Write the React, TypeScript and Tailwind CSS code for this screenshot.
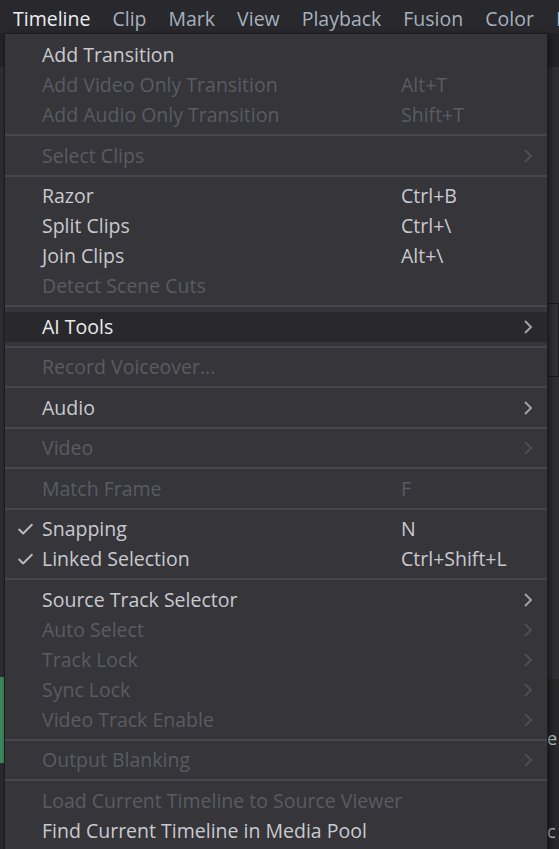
import { Check } from 'lucide-react';

type Item = {
  label: string;
  shortcut?: string;
  disabled?: boolean;
  checked?: boolean;
  submenu?: boolean;
  active?: boolean;
};

// null marks a separator
const items: (Item | null)[] = [
  { label: 'Add Transition' },
  { label: 'Add Video Only Transition', shortcut: 'Alt+T', disabled: true },
  { label: 'Add Audio Only Transition', shortcut: 'Shift+T', disabled: true },
  null,
  { label: 'Select Clips', disabled: true, submenu: true },
  null,
  { label: 'Razor', shortcut: 'Ctrl+B' },
  { label: 'Split Clips', shortcut: 'Ctrl+\\' },
  { label: 'Join Clips', shortcut: 'Alt+\\' },
  { label: 'Detect Scene Cuts', disabled: true },
  null,
  { label: 'AI Tools', submenu: true, active: true },
  null,
  { label: 'Record Voiceover...', disabled: true },
  null,
  { label: 'Audio', submenu: true },
  null,
  { label: 'Video', disabled: true, submenu: true },
  null,
  { label: 'Match Frame', shortcut: 'F', disabled: true },
  null,
  { label: 'Snapping', shortcut: 'N', checked: true },
  { label: 'Linked Selection', shortcut: 'Ctrl+Shift+L', checked: true },
  null,
  { label: 'Source Track Selector', submenu: true },
  { label: 'Auto Select', disabled: true, submenu: true },
  { label: 'Track Lock', disabled: true, submenu: true },
  { label: 'Sync Lock', disabled: true, submenu: true },
  { label: 'Video Track Enable', disabled: true, submenu: true },
  null,
  { label: 'Output Blanking', disabled: true, submenu: true },
  null,
  { label: 'Load Current Timeline to Source Viewer', disabled: true },
  { label: 'Find Current Timeline in Media Pool' },
];

const menus = ['Timeline', 'Clip', 'Mark', 'View', 'Playback', 'Fusion', 'Color', 'Fairlight'];

function Arrow({ dim }: { dim?: boolean }) {
  return (
    <svg width="10" height="14" viewBox="0 0 10 14" className={dim ? 'text-[#4e4f55]' : 'text-[#a2a3a7]'}>
      <polyline points="2,1 8,7 2,13" fill="none" stroke="currentColor" strokeWidth="2" />
    </svg>
  );
}

function MenuRow({ item }: { item: Item }) {
  const text = item.active
    ? 'text-[#ececee]'
    : item.disabled
      ? 'text-[#5b5c61]'
      : 'text-[#c9cacf]';
  return (
    <div
      className={`flex h-[30px] items-center text-[19.5px] ${text} ${
        item.active ? 'bg-[#29292b]' : ''
      }`}
    >
      <div className="flex w-[37px] shrink-0 items-center justify-end pr-[7px]">
        {item.checked && <Check className="h-[19px] w-[19px] text-[#b9babd]" strokeWidth={2.5} />}
      </div>
      <span className="w-[359px] shrink-0 whitespace-nowrap">{item.label}</span>
      <span className="flex-1 whitespace-nowrap">{item.shortcut}</span>
      <div className="flex w-[24px] shrink-0 items-center">
        {item.submenu && <Arrow dim={item.disabled} />}
      </div>
    </div>
  );
}

export default function App() {
  return (
    <div
      className="relative h-[849px] w-[559px] overflow-hidden bg-[#2e2e33]"
      style={{ fontFamily: '"Open Sans", "Noto Sans", sans-serif' }}
    >
      {/* top menu bar */}
      <div className="flex h-[33px] items-center gap-[22px] overflow-hidden bg-[#28282d] pl-[13px] pt-[5px] text-[19.5px] text-[#a7b1bd] whitespace-nowrap">
        {menus.map((m, i) => (
          <span key={m} className={i === 0 ? 'text-[#eceef1]' : ''}>
            {m}
          </span>
        ))}
      </div>

      {/* panels peeking out behind the dropdown */}
      <div className="flex h-[816px]">
        <div className="flex w-[6px] flex-col">
          <div className="h-[34px] bg-[#242427]" />
          <div className="h-[610px] bg-[#2d2d32]" />
          <div className="h-[86px] bg-[#3c8a5c]" />
          <div className="flex-1 bg-[#2a2a2d]" />
        </div>
        <div className="flex-1" />
        <div className="flex w-[14px] flex-col">
          <div className="h-[34px] bg-[#232326]" />
          <div className="h-[236px] bg-[#2f2f34]" />
          <div className="h-[74px] border border-[#1b1b1d] bg-[#313136]" />
          <div className="h-[302px] bg-[#2f2f34]" />
          <div className="flex-1 bg-[#28282a] pl-[2px] text-[18px] text-[#b8c2cc]">
            <div className="mt-[46px]">e</div>
            <div className="mt-[66px]">c</div>
          </div>
        </div>
      </div>

      {/* dropdown */}
      <div className="absolute left-[4px] top-[33px] w-[544px] border border-[#1c1c1f] bg-[#35353a] pt-[6px] shadow-[2px_2px_6px_rgba(0,0,0,0.5)]">
        {items.map((item, i) =>
          item ? (
            <MenuRow key={i} item={item} />
          ) : (
            <div key={i} className="flex h-[10.5px] items-center">
              <div className="h-[2px] w-full bg-[#46474c]" />
            </div>
          ),
        )}
        <div className="h-[6px]" />
      </div>
    </div>
  );
}
